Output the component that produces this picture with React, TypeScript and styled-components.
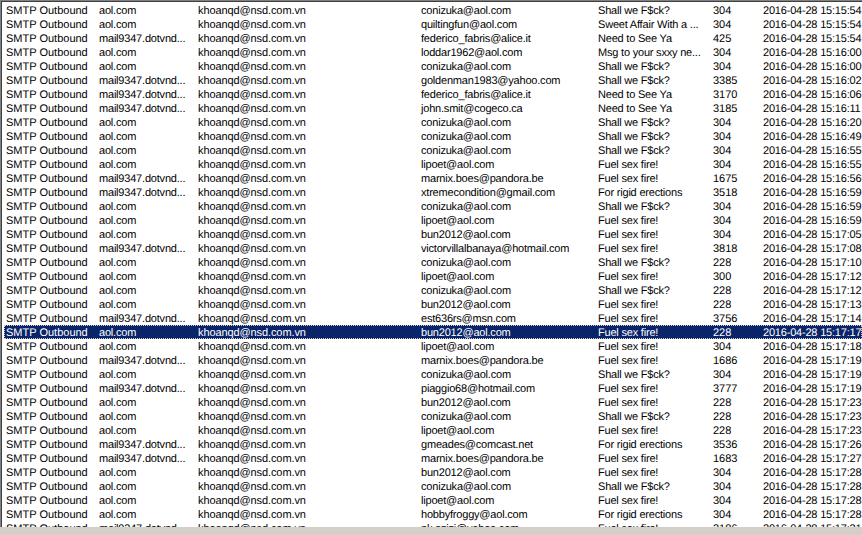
import React from "react";
import styled, { createGlobalStyle } from "styled-components";

const GlobalStyle = createGlobalStyle`
  html, body {
    margin: 0;
    padding: 0;
    background: #d4d0c8;
    overflow: hidden;
  }
`;

const Window = styled.div`
  width: 862px;
  height: 535px;
  display: flex;
  flex-direction: column;
  background: #d4d0c8;
  overflow: hidden;
`;

const List = styled.div`
  height: 527px;
  box-sizing: border-box;
  background: #fff;
  border-top: 1px solid #808080;
  border-left: 1px solid #808080;
  box-shadow: inset 1px 1px 0 #404040;
  padding: 2px 0 0 3px;
  overflow: hidden;
  font-family: "Liberation Sans", Arial, sans-serif;
  font-size: 11px;
  text-rendering: geometricPrecision;
  color: #000;
`;

const Row = styled.div<{ $selected?: boolean }>`
  display: grid;
  grid-template-columns: 93px 99px 223px 177px 115px 50px 1fr;
  height: 14px;
  line-height: 16px;
  padding-left: 2px;
  white-space: nowrap;
  box-sizing: border-box;
  width: 858px;
  background: ${(p) => (p.$selected ? "#0a246a" : "transparent")};
  color: ${(p) => (p.$selected ? "#fff" : "#000")};
  outline: ${(p) => (p.$selected ? "1px dotted #d4d0c8" : "none")};
  outline-offset: -1px;
`;

const Cell = styled.span<{ $tight?: number }>`
  letter-spacing: ${(p) => p.$tight ?? 0}px;
`;

const AOL = "aol.com";
const MAIL = "mail9347.dotvnd...";
const SHALL = "Shall we F$ck?";
const NEED = "Need to See Ya";
const FUEL = "Fuel sex fire!";
const RIGID = "For rigid erections";

type Message = [string, string, string, string, string];

const messages: Message[] = [
  [AOL, "conizuka@aol.com", SHALL, "304", "15:15:54"],
  [AOL, "quiltingfun@aol.com", "Sweet Affair With a ...", "304", "15:15:54"],
  [MAIL, "federico_fabris@alice.it", NEED, "425", "15:15:54"],
  [AOL, "loddar1962@aol.com", "Msg to your sxxy ne...", "304", "15:16:00"],
  [AOL, "conizuka@aol.com", SHALL, "304", "15:16:00"],
  [MAIL, "goldenman1983@yahoo.com", SHALL, "3385", "15:16:02"],
  [MAIL, "federico_fabris@alice.it", NEED, "3170", "15:16:06"],
  [MAIL, "john.smit@cogeco.ca", NEED, "3185", "15:16:11"],
  [AOL, "conizuka@aol.com", SHALL, "304", "15:16:20"],
  [AOL, "conizuka@aol.com", SHALL, "304", "15:16:49"],
  [AOL, "conizuka@aol.com", SHALL, "304", "15:16:55"],
  [AOL, "lipoet@aol.com", FUEL, "304", "15:16:55"],
  [MAIL, "marnix.boes@pandora.be", FUEL, "1675", "15:16:56"],
  [MAIL, "xtremecondition@gmail.com", RIGID, "3518", "15:16:59"],
  [AOL, "conizuka@aol.com", SHALL, "304", "15:16:59"],
  [AOL, "lipoet@aol.com", FUEL, "304", "15:16:59"],
  [AOL, "bun2012@aol.com", FUEL, "304", "15:17:05"],
  [MAIL, "victorvillalbanaya@hotmail.com", FUEL, "3818", "15:17:08"],
  [AOL, "conizuka@aol.com", SHALL, "228", "15:17:10"],
  [AOL, "lipoet@aol.com", FUEL, "300", "15:17:12"],
  [AOL, "conizuka@aol.com", SHALL, "228", "15:17:12"],
  [AOL, "bun2012@aol.com", FUEL, "228", "15:17:13"],
  [MAIL, "est636rs@msn.com", FUEL, "3756", "15:17:14"],
  [AOL, "bun2012@aol.com", FUEL, "228", "15:17:17"],
  [AOL, "lipoet@aol.com", FUEL, "304", "15:17:18"],
  [MAIL, "marnix.boes@pandora.be", FUEL, "1686", "15:17:19"],
  [AOL, "conizuka@aol.com", SHALL, "304", "15:17:19"],
  [MAIL, "piaggio68@hotmail.com", FUEL, "3777", "15:17:19"],
  [AOL, "bun2012@aol.com", FUEL, "228", "15:17:23"],
  [AOL, "conizuka@aol.com", SHALL, "228", "15:17:23"],
  [AOL, "lipoet@aol.com", FUEL, "228", "15:17:23"],
  [MAIL, "gmeades@comcast.net", RIGID, "3536", "15:17:26"],
  [MAIL, "marnix.boes@pandora.be", FUEL, "1683", "15:17:27"],
  [AOL, "bun2012@aol.com", FUEL, "304", "15:17:28"],
  [AOL, "conizuka@aol.com", SHALL, "304", "15:17:28"],
  [AOL, "lipoet@aol.com", FUEL, "304", "15:17:28"],
  [AOL, "hobbyfroggy@aol.com", RIGID, "304", "15:17:28"],
  [MAIL, "pk.azizi@yahoo.com", FUEL, "3186", "15:17:31"],
];

const SELECTED_INDEX = 23;

function App() {
  return (
    <Window>
      <GlobalStyle />
      <List>
        {messages.map(([server, to, subject, size, time], i) => (
          <Row key={i} $selected={i === SELECTED_INDEX}>
            <Cell>SMTP Outbound</Cell>
            <Cell $tight={-0.2}>{server}</Cell>
            <Cell $tight={-0.1}>khoanqd@nsd.com.vn</Cell>
            <Cell $tight={-0.2}>{to}</Cell>
            <Cell $tight={-0.2}>{subject}</Cell>
            <Cell>{size}</Cell>
            <Cell $tight={-0.2}>2016-04-28 {time}</Cell>
          </Row>
        ))}
      </List>
    </Window>
  );
}

export default App;
